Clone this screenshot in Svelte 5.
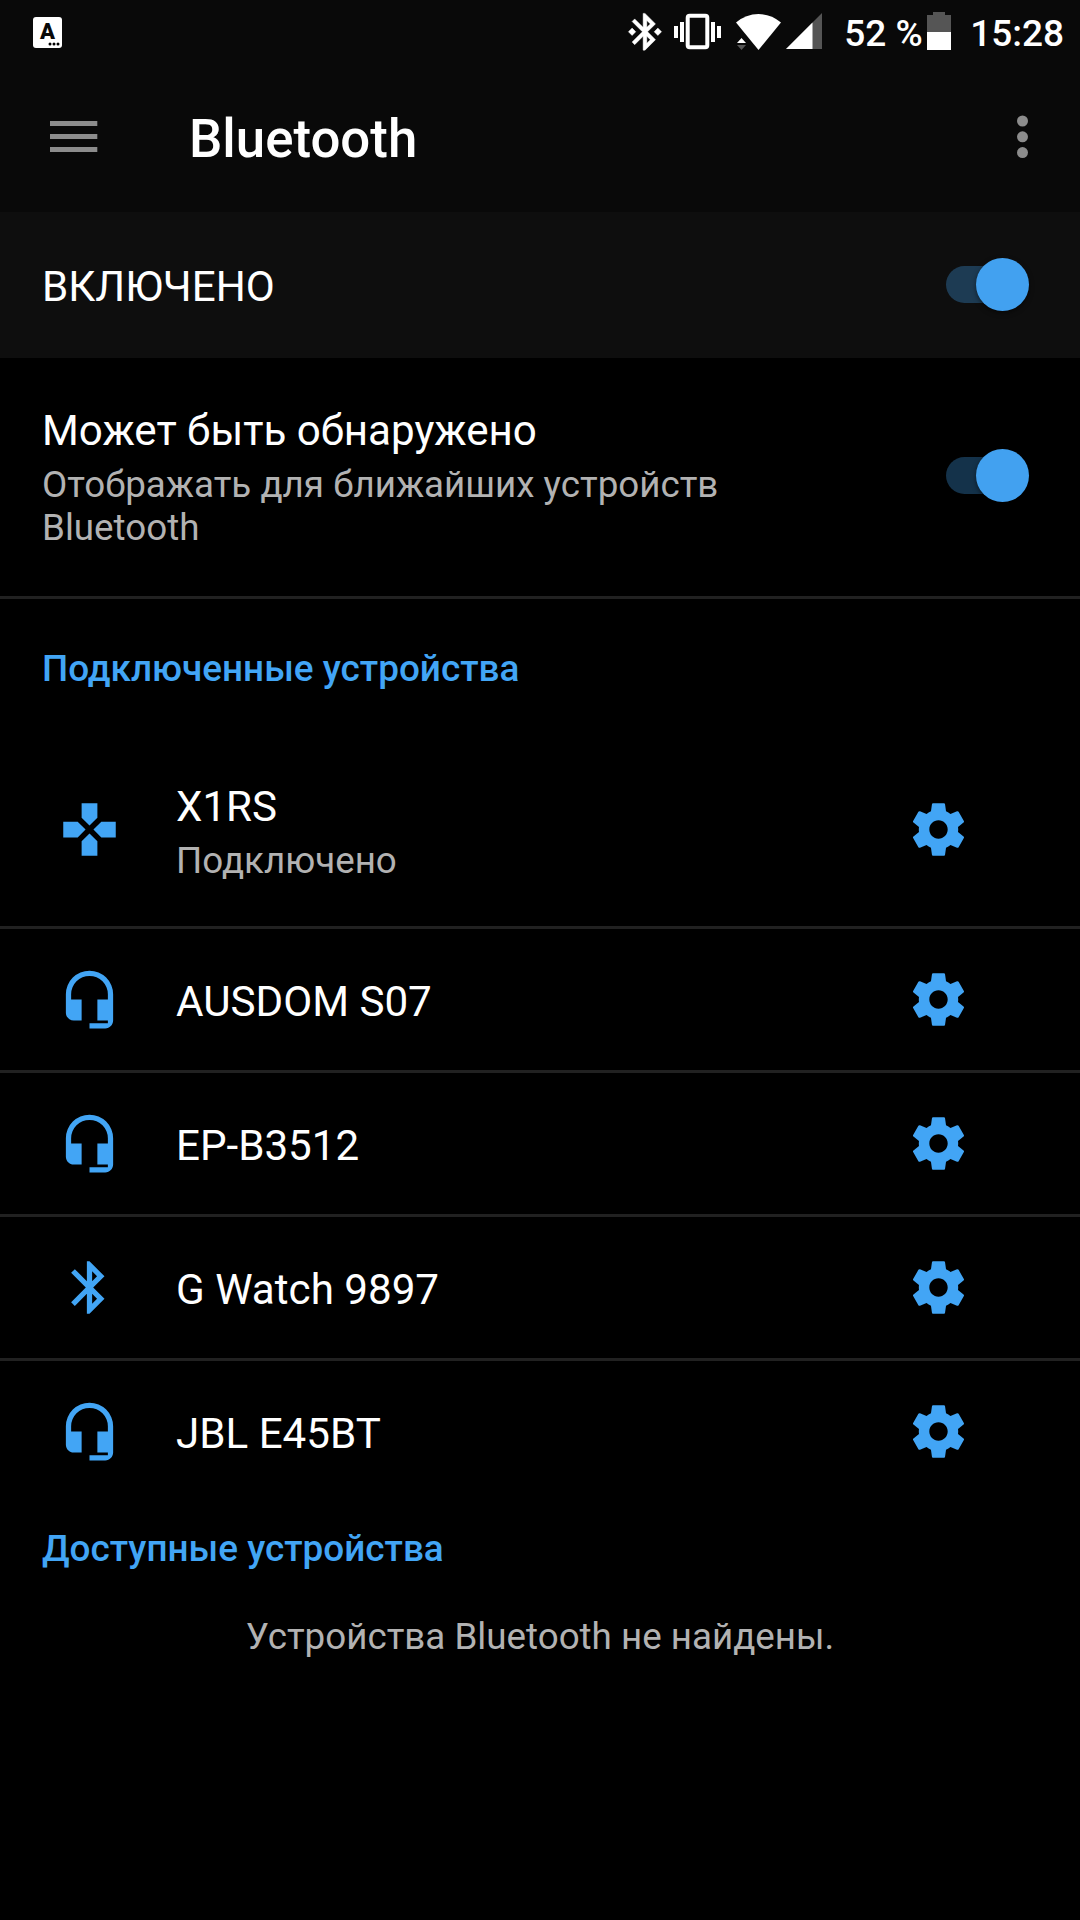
<script>
  let enabled = $state(true);
  let discoverable = $state(true);

  const paired = [
    { name: "X1RS", status: "Подключено", icon: "gamepad" },
    { name: "AUSDOM S07", icon: "headset" },
    { name: "EP-B3512", icon: "headset" },
    { name: "G Watch 9897", icon: "bluetooth" },
    { name: "JBL E45BT", icon: "headset" },
  ];

  const icons = {
    gamepad: "M15 7.5V2H9v5.5l3 3 3-3zM7.5 9H2v6h5.5l3-3-3-3zM9 16.5V22h6v-5.5l-3-3-3 3zM16.5 9l-3 3 3 3H22V9h-5.5z",
    headset: "M12 1a9 9 0 0 0-9 9v7c0 1.66 1.34 3 3 3h3v-8H5v-2a7 7 0 0 1 14 0v2h-4v8h4v1h-7v2h6c1.66 0 3-1.34 3-3V10a9 9 0 0 0-9-9z",
    bluetooth: "M17.71 7.71 12 2h-1v7.59L6.41 5 5 6.41 10.59 12 5 17.59 6.41 19 11 14.41V22h1l5.71-5.71-4.3-4.29 4.3-4.29zM13 5.83l1.88 1.88L13 9.59V5.83zm1.88 10.46L13 18.17v-3.76l1.88 1.88z",
  };
</script>

{#snippet toggle(on, label, flip)}
  <button class="switch" class:on role="switch" aria-checked={on} aria-label={label} onclick={flip}>
    <span class="track"></span>
    <span class="thumb"></span>
  </button>
{/snippet}

<div class="screen">
  <div class="top">
    <div class="status">
      <span class="keyboard"><b>A</b>
        <svg viewBox="0 0 12 4"><circle cx="2" cy="2" r="1.5" /><circle cx="6" cy="2" r="1.5" /><circle cx="10" cy="2" r="1.5" /></svg>
      </span>

      <!-- Bluetooth, vibrate, wifi and cell signal -->
      <svg class="indicators" width="210" height="64" viewBox="0 0 210 64" fill="#fff">
        <g transform="translate(2.9 9.7) scale(1.84)" stroke="#fff" stroke-width="0.25">
          <path d={icons.bluetooth} />
          <path d="m5 10-2 2 2 2 2-2zM19 10l-2 2 2 2 2-2z" />
        </g>
        <rect x="67.7" y="15.7" width="19.6" height="31.6" rx="2" fill="none" stroke="#fff" stroke-width="4" />
        <path d="M54 26h4v12h-4zM60 22h4v20h-4zM91 22h4v20h-4zM97 26h4v12h-4z" />
        <path d="M138.500 50 116 22.500Q126 14 138.500 14T161 22.500z" />
        <path d="m121.500 38 4.500 5h-9z" />
        <path d="m121.500 50-4.500-5h9z" fill="#555" />
        <path d="M202 13v36h-36z" fill="#555" />
        <path d="M192.500 22.500V49H166z" />
      </svg>
      <span class="percent">52 %</span>
      <svg class="battery" width="24" height="38" viewBox="0 0 24 38">
        <path d="M6 0h12v3h6v17H0V3h6z" fill="#555" />
        <path d="M0 20h24v18H0z" fill="#fff" />
      </svg>
      <span class="clock">15:28</span>
    </div>

    <header>
      <svg class="menu" width="48" height="33" viewBox="0 0 48 33" fill="#8c8c8c">
        <path d="M0 1h47.300v5H0zM0 14h47.300v5H0zM0 27h47.300v5H0z" />
      </svg>
      <h1>Bluetooth</h1>
      <svg class="more" width="12" height="44" viewBox="0 0 12 44" fill="#8c8c8c">
        <circle cx="6.500" cy="6" r="5.500" />
        <circle cx="6.500" cy="21.800" r="5.500" />
        <circle cx="6.500" cy="37.600" r="5.500" />
      </svg>
    </header>
  </div>

  <div class="row master">
    <div class="title">{enabled ? "ВКЛЮЧЕНО" : "ВЫКЛЮЧЕНО"}</div>
    {@render toggle(enabled, "Bluetooth", () => (enabled = !enabled))}
  </div>

  <div class="row visibility">
    <div class="text">
      <div class="title">Может быть обнаружено</div>
      <div class="summary">Отображать для ближайших устройств Bluetooth</div>
    </div>
    {@render toggle(discoverable, "Может быть обнаружено", () => (discoverable = !discoverable))}
  </div>

  <h2 class="first">Подключенные устройства</h2>
  <ul>
    {#each paired as device (device.name)}
      <li class:tall={device.status}>
        <svg class="icon" viewBox="0 0 24 24"><path d={icons[device.icon]} /></svg>
        <div class="text">
          <div class="title">{device.name}</div>
          {#if device.status}
            <div class="summary">{device.status}</div>
          {/if}
        </div>
        <svg class="icon gear" viewBox="0 0 24 24">
          <path d="M19.43 12.98c.04-.32.07-.64.07-.98s-.03-.66-.07-.98l2.110-1.650c.19-.15.24-.42.12-.64l-2-3.460c-.12-.22-.39-.3-.61-.22l-2.490 1c-.52-.4-1.080-.73-1.690-.98l-.38-2.650C14.460 2.180 14.250 2 14 2h-4c-.25 0-.46.18-.49.42l-.38 2.650c-.61.25-1.170.59-1.690.98l-2.490-1c-.23-.09-.49 0-.61.22l-2 3.460c-.13.22-.07.49.12.64l2.110 1.650c-.04.32-.07.65-.07.98s.03.66.07.98l-2.110 1.650c-.19.15-.24.42-.12.64l2 3.460c.12.22.39.3.61.22l2.490-1c.52.4 1.080.73 1.690.98l.38 2.650c.03.24.24.42.49.42h4c.25 0 .46-.18.49-.42l.38-2.650c.61-.25 1.170-.59 1.690-.98l2.490 1c.23.09.49 0 .61-.22l2-3.460c.12-.22.07-.49-.12-.64l-2.110-1.650zM12 15.500c-1.930 0-3.500-1.570-3.500-3.500s1.570-3.500 3.500-3.500 3.500 1.570 3.500 3.500-1.570 3.500-3.500 3.500z" />
        </svg>
      </li>
    {/each}
  </ul>

  <h2>Доступные устройства</h2>
  <p>Устройства Bluetooth не найдены.</p>
</div>

<style>
  :global(body) {
    background: #000;
  }

  .screen {
    width: 1080px;
    height: 1920px;
    overflow: hidden;
    background: #000;
    color: #fff;
    font-family: Roboto, "Noto Sans", sans-serif;
  }

  .top {
    height: 212px;
    background: #090909;
  }

  .status {
    display: flex;
    align-items: center;
    height: 64px;
    padding: 0 16px 0 33px;
    font-size: 37px;
    font-weight: 500;
  }
  .keyboard {
    position: relative;
    width: 29px;
    height: 31px;
    border-radius: 3px;
    background: #fff;
    color: #090909;
    font-size: 22px;
    line-height: 30px;
    text-align: center;
  }
  .keyboard b {
    font-weight: 900;
  }
  .keyboard svg {
    position: absolute;
    right: 2px;
    bottom: 2px;
    width: 12px;
    height: 4px;
  }
  .indicators {
    margin-left: auto;
  }
  .percent {
    width: 77px;
    margin-left: 14px;
    padding-top: 2px;
    white-space: nowrap;
  }
  .battery {
    margin: -2px 19px 0 6px;
  }
  .clock {
    padding-top: 2px;
  }

  header {
    display: flex;
    align-items: center;
    height: 148px;
    padding: 0 52px 0 50px;
    box-sizing: border-box;
  }
  .menu {
    margin-top: -3px;
  }
  h1 {
    margin: 0 0 0 91px;
    padding-top: 2px;
    font-size: 52.8px;
    font-weight: 500;
  }
  .more {
    margin: -3px 0 0 auto;
  }

  .row {
    display: flex;
    align-items: center;
    justify-content: space-between;
    box-sizing: border-box;
    padding: 0 51px 0 42px;
  }
  .master {
    height: 146px;
    background: #0e0e0e;
  }
  .master .title {
    padding-top: 2px;
  }
  .visibility {
    height: 241px;
    border-bottom: 3px solid #212121;
  }
  .visibility .text {
    width: 720px;
  }
  .title {
    font-size: 42.15px;
    line-height: 49px;
  }
  .summary {
    margin-top: 8px;
    color: #b2b2b2;
    font-size: 36.75px;
    line-height: 43px;
  }

  .switch {
    position: relative;
    width: 83px;
    height: 53px;
    margin-bottom: 1px;
    padding: 0;
    border: 0;
    background: none;
  }
  .visibility .switch {
    margin-bottom: 4px;
  }
  .track {
    position: absolute;
    top: 8px;
    left: 0;
    width: 70px;
    height: 37px;
    border-radius: 19px;
    background: #fff;
    opacity: 0.3;
  }
  .thumb {
    position: absolute;
    top: 0;
    left: 0;
    width: 53px;
    height: 53px;
    border-radius: 50%;
    background: #bdbdbd;
    box-shadow: 0 2px 5px rgba(0, 0, 0, 0.5);
  }
  .on .track {
    background: #42a5f5;
  }
  .on .thumb {
    left: 30px;
    background: #42a1f0;
  }

  h2 {
    margin: 0;
    padding: 22px 42px 0;
    color: #42a5f5;
    font-size: 36.9px;
    font-weight: 500;
    line-height: 43px;
  }
  h2.first {
    height: 86px;
    padding-top: 48px;
  }

  ul {
    margin: 0;
    padding: 0;
    list-style: none;
  }
  li {
    display: flex;
    align-items: center;
    box-sizing: border-box;
    height: 144px;
    padding: 0 110px 0 58px;
    border-bottom: 3px solid #212121;
  }
  li.tall {
    height: 196px;
  }
  li:last-child {
    border-bottom-color: transparent;
  }
  li .text {
    margin-left: 55px;
    padding-top: 4px;
  }
  .icon {
    width: 63px;
    height: 63px;
    fill: #42a5f5;
  }
  .gear {
    margin-left: auto;
  }

  p {
    margin: 45px 0 0;
    color: #b2b2b2;
    font-size: 36.75px;
    line-height: 43px;
    text-align: center;
  }
</style>
